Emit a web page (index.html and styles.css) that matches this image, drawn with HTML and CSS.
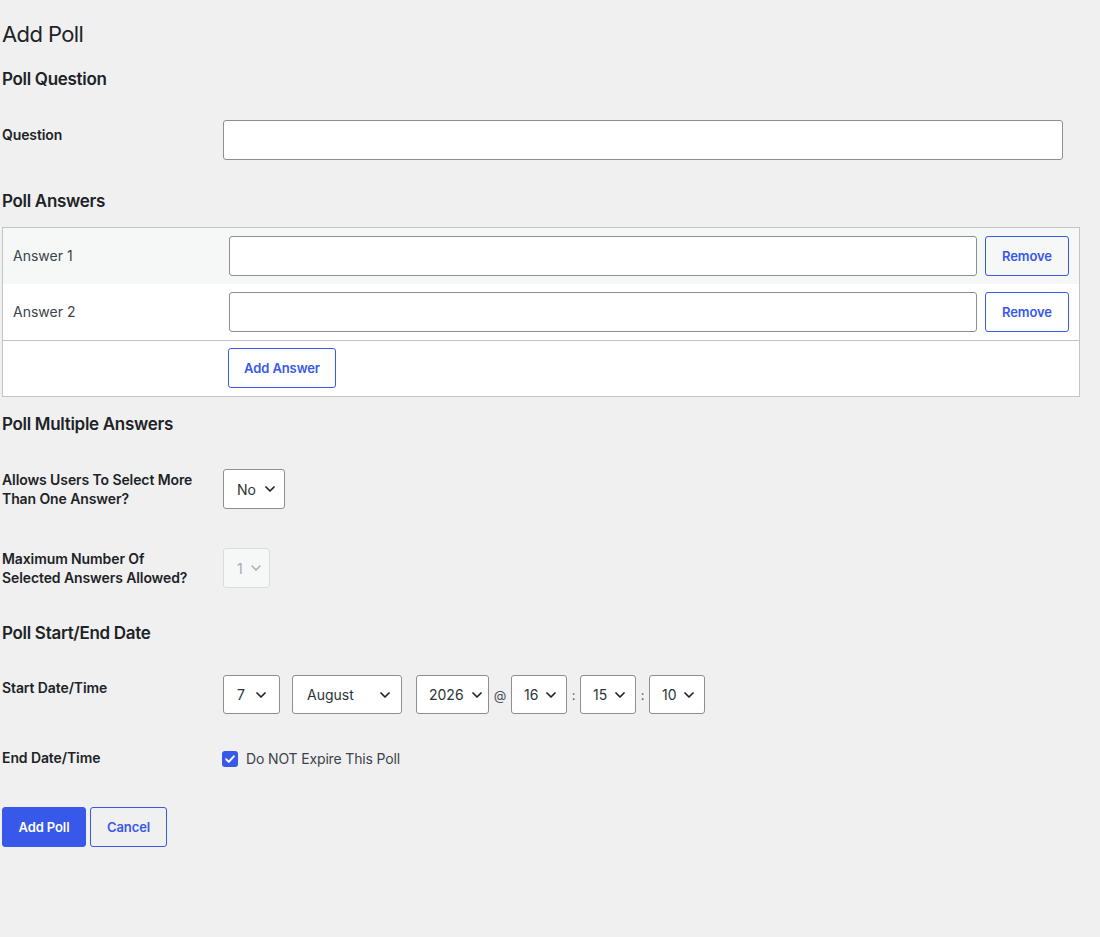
FILE: index.html
```html
<!DOCTYPE html>
<html lang="en">
<head>
<meta charset="utf-8">
<title>Add Poll</title>
<link rel="stylesheet" href="styles.css">
</head>
<body>
<div class="wrap">
  <h1 class="page-title">Add Poll</h1>

  <h2 class="section-title first">Poll Question</h2>
  <div class="field-row row-question">
    <div class="field-label label-question">Question</div>
    <div class="field-control"><input class="text-input question-input" type="text"></div>
  </div>

  <h2 class="section-title after-question">Poll Answers</h2>
  <div class="answers">
    <div class="answer-row striped">
      <div class="answer-label">Answer 1</div>
      <input class="text-input answer-input" type="text">
      <button class="btn btn-secondary btn-remove" type="button">Remove</button>
    </div>
    <div class="answer-row">
      <div class="answer-label">Answer 2</div>
      <input class="text-input answer-input" type="text">
      <button class="btn btn-secondary btn-remove" type="button">Remove</button>
    </div>
    <div class="answer-foot">
      <button class="btn btn-secondary btn-add-answer" type="button">Add Answer</button>
    </div>
  </div>

  <h2 class="section-title after-answers">Poll Multiple Answers</h2>
  <div class="field-row row-multi">
    <div class="field-label label-two">Allows Users To Select More<br>Than One Answer?</div>
    <div class="field-control">
      <div class="select w-no"><span>No</span><svg class="chev" viewBox="0 0 10 6" width="10" height="6"><path d="M1 1l4 4 4-4" fill="none" stroke="currentColor" stroke-width="1.7" stroke-linecap="round" stroke-linejoin="round"/></svg></div>
    </div>
  </div>
  <div class="field-row row-max">
    <div class="field-label label-two">Maximum Number Of<br>Selected Answers Allowed?</div>
    <div class="field-control">
      <div class="select disabled w-one"><span>1</span><svg class="chev" viewBox="0 0 10 6" width="10" height="6"><path d="M1 1l4 4 4-4" fill="none" stroke="currentColor" stroke-width="1.4" stroke-linecap="round" stroke-linejoin="round"/></svg></div>
    </div>
  </div>

  <h2 class="section-title after-max">Poll Start/End Date</h2>
  <div class="field-row row-start">
    <div class="field-label label-start">Start Date/Time</div>
    <div class="field-control date-controls">
      <div class="select date w-day"><span>7</span><svg class="chev" viewBox="0 0 10 6" width="10" height="6"><path d="M1 1l4 4 4-4" fill="none" stroke="currentColor" stroke-width="1.7" stroke-linecap="round" stroke-linejoin="round"/></svg></div>
      <div class="select date w-month"><span>August</span><svg class="chev" viewBox="0 0 10 6" width="10" height="6"><path d="M1 1l4 4 4-4" fill="none" stroke="currentColor" stroke-width="1.7" stroke-linecap="round" stroke-linejoin="round"/></svg></div>
      <div class="select date w-year"><span>2026</span><svg class="chev" viewBox="0 0 10 6" width="10" height="6"><path d="M1 1l4 4 4-4" fill="none" stroke="currentColor" stroke-width="1.7" stroke-linecap="round" stroke-linejoin="round"/></svg></div>
      <span class="sep sep-at">@</span>
      <div class="select date w-time"><span>16</span><svg class="chev" viewBox="0 0 10 6" width="10" height="6"><path d="M1 1l4 4 4-4" fill="none" stroke="currentColor" stroke-width="1.7" stroke-linecap="round" stroke-linejoin="round"/></svg></div>
      <span class="sep sep-colon">:</span>
      <div class="select date w-time"><span>15</span><svg class="chev" viewBox="0 0 10 6" width="10" height="6"><path d="M1 1l4 4 4-4" fill="none" stroke="currentColor" stroke-width="1.7" stroke-linecap="round" stroke-linejoin="round"/></svg></div>
      <span class="sep sep-colon">:</span>
      <div class="select date w-time"><span>10</span><svg class="chev" viewBox="0 0 10 6" width="10" height="6"><path d="M1 1l4 4 4-4" fill="none" stroke="currentColor" stroke-width="1.7" stroke-linecap="round" stroke-linejoin="round"/></svg></div>
    </div>
  </div>
  <div class="field-row row-end">
    <div class="field-label label-end">End Date/Time</div>
    <div class="field-control check-control">
      <span class="checkbox"><svg viewBox="0 0 16 16" width="16" height="16"><path d="M4.2 8.3l2.6 2.6 5-5.6" fill="none" stroke="#fff" stroke-width="2" stroke-linecap="round" stroke-linejoin="round"/></svg></span>
      <span class="check-label">Do NOT Expire This Poll</span>
    </div>
  </div>

  <div class="actions">
    <button class="btn btn-primary btn-add-poll" type="button">Add Poll</button>
    <button class="btn btn-secondary btn-cancel" type="button">Cancel</button>
  </div>
</div>
</body>
</html>
```

FILE: styles.css
```css
* { box-sizing: border-box; }

html, body {
  margin: 0;
  padding: 0;
  background: #f0f0f1;
}

body {
  font-family: Inter, "Noto Sans", "Liberation Sans", sans-serif;
  color: #1d2327;
  font-size: 14px;
}

.wrap {
  padding: 0 0 60px 2px;
}

.page-title {
  margin: 0;
  padding-top: 19px;
  font-size: 22px;
  font-weight: 400;
  line-height: 30px;
  letter-spacing: -0.6px;
  color: #1d2327;
}

.section-title {
  margin: 0;
  font-size: 17px;
  font-weight: 600;
  line-height: 22px;
  letter-spacing: -0.3px;
  color: #1d2327;
}
.section-title.first { margin-top: 19px; }
.section-title.after-question { margin-top: 30px; }
.section-title.after-answers { margin-top: 16px; }
.section-title.after-max { margin-top: 34px; }

.field-row {
  display: flex;
  align-items: flex-start;
}
.row-question { margin-top: 30px; }
.row-multi { margin-top: 34px; }
.row-max { margin-top: 39px; }
.row-start { margin-top: 31px; }
.row-end { margin-top: 35px; }

.field-label {
  width: 221px;
  flex: none;
  font-size: 14px;
  font-weight: 600;
  line-height: 18px;
  letter-spacing: -0.1px;
  color: #1d2327;
}
.label-question { padding-top: 6px; }
.label-two { padding-top: 2px; line-height: 18.5px; }
.label-start { padding-top: 4px; }
.label-end { padding-top: 0; }

.field-control {
  display: flex;
  align-items: center;
}

.text-input {
  display: block;
  height: 40px;
  border: 1px solid #8c8f94;
  border-radius: 3px;
  background: #fff;
  font: inherit;
  padding: 0 8px;
  outline: none;
}
.question-input { width: 840px; }

/* Answers box */
.answers {
  margin-top: 15px;
  width: 1078px;
  border: 1px solid #c3c4c7;
  background: #fff;
}
.answer-row {
  display: flex;
  align-items: center;
  height: 56px;
  padding-right: 10px;
}
.answer-row.striped { background: #f6f7f7; }
.answer-label {
  width: 226px;
  flex: none;
  padding-left: 10px;
  padding-bottom: 1px;
  font-size: 14px;
  color: #3c434a;
}
.answer-input {
  flex: 1;
  min-width: 0;
}
.answer-foot {
  border-top: 1px solid #c3c4c7;
  height: 56px;
  display: flex;
  align-items: center;
  padding-left: 225px;
  padding-bottom: 1px;
}

/* Buttons */
.btn {
  height: 40px;
  border-radius: 3px;
  font-family: inherit;
  font-size: 13px;
  font-weight: 600;
  letter-spacing: -0.1px;
  cursor: pointer;
  padding: 0;
  line-height: 38px;
}
.btn-secondary {
  background: transparent;
  border: 1px solid #3858e9;
  color: #3858e9;
}
.btn-primary {
  background: #3858e9;
  border: 1px solid #3858e9;
  color: #fff;
}
.btn-remove { width: 84px; margin-left: 8px; flex: none; }
.btn-add-answer { width: 108px; }
.actions {
  margin-top: 40px;
  display: flex;
  gap: 4px;
}
.btn-add-poll { width: 84px; }
.btn-cancel { width: 77px; }

/* Selects */
.select {
  height: 40px;
  border: 1px solid #8c8f94;
  border-radius: 3px;
  background: #fff;
  display: flex;
  align-items: center;
  justify-content: space-between;
  padding: 0 13px 0 13px;
  font-size: 14px;
  color: #2c3338;
  flex: none;
}
.select.date { height: 39px; }
.select .chev { color: #1d2327; flex: none; }
.select.disabled {
  background: #f6f7f7;
  border-color: #dcdcde;
  color: #a7aaad;
}
.select.disabled .chev { color: #a7aaad; }
.w-no { width: 62px; padding-right: 9px; }
.w-one { width: 47px; padding-right: 8px; }
.w-day { width: 57px; }
.w-month { width: 110px; margin-left: 12px; padding-left: 14px; padding-right: 11px; }
.w-year { width: 73px; margin-left: 14px; padding-right: 6px; padding-left: 12px; }
.w-time { width: 56px; padding-right: 10px; padding-left: 12px; }

.date-controls { align-items: center; }
.sep {
  color: #50575e;
  font-size: 13px;
  text-align: center;
  flex: none;
}
.sep-at { width: 22px; }
.sep-colon { width: 13px; }

/* Checkbox */
.check-control {
  padding-top: 2px;
  margin-left: -1px;
}
.checkbox {
  width: 16px;
  height: 16px;
  border-radius: 3px;
  background: #3858e9;
  display: block;
  flex: none;
}
.checkbox svg { display: block; }
.check-label {
  margin-left: 8px;
  font-size: 14px;
  letter-spacing: -0.15px;
  color: #3c434a;
  line-height: 16px;
}
```
